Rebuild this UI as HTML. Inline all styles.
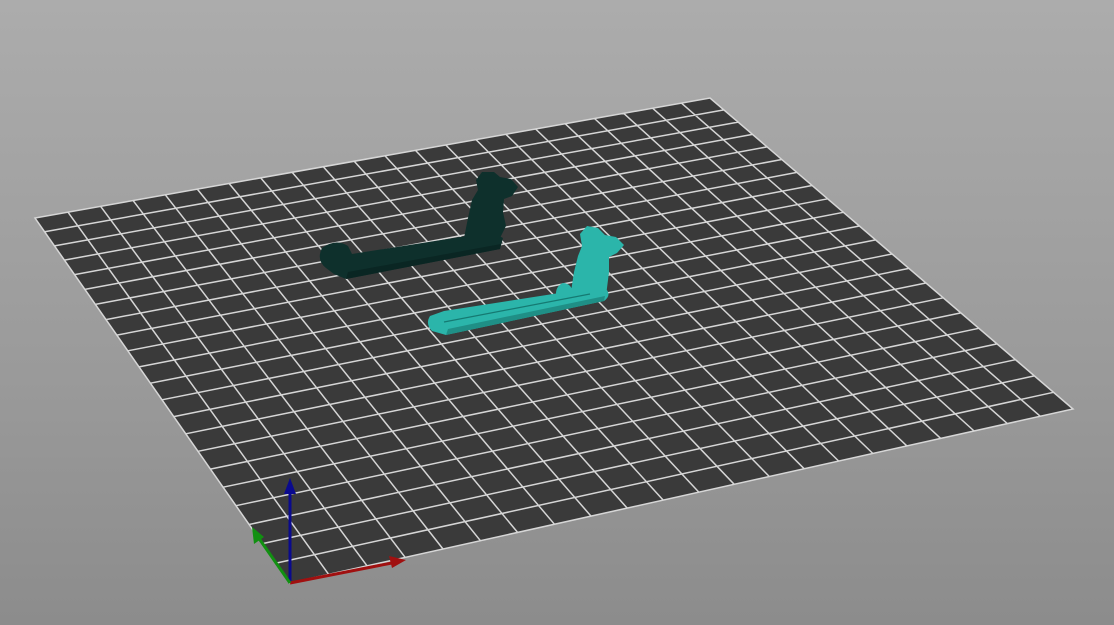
<!DOCTYPE html>
<html><head><meta charset="utf-8"><style>
html,body{margin:0;padding:0}
body{width:1114px;height:625px;overflow:hidden;background:linear-gradient(#acacac,#9a9a9a 60%,#8c8c8c)}
svg{position:absolute;left:0;top:0}
</style></head><body>
<svg id="s" width="1114" height="625" viewBox="0 0 1114 625">
<polygon points="290,583 1073,409 710,98 35,218" fill="#3a3a3a"/>
<g id="grid" stroke="#d6d6d6" stroke-width="1.5" fill="none"></g>
<!-- dark object -->
<g fill="#0e302c">
<path d="M322,248 Q316,260 326,268 L334,274 L346,279 L500,249 L503,238 L492,232 L352,254 L348,246 Q336,238 322,248 Z"/>
<path d="M464,238 L468,218 L472,200 L478,190 L476,180 L482,172 L494,172 L500,177 L511,179 L518,187 L512,196 L504,199 L503,212 L506,226 L500,238 Z"/>
</g>
<g fill="#0a2623"><path d="M346,279 L500,249 L501,244 L348,272 Z"/></g>
<!-- teal object -->
<g fill="#2bb5aa">
<path d="M430,316 Q425,324 432,331 L446,335 L604,301 Q611,296 607,290 L598,287 L444,311 Z"/>
<path d="M570,298 L574,272 L578,256 L582,246 L580,234 L587,226 L598,228 L605,235 L616,237 L624,245 L617,253 L609,257 L609,272 L606,296 Z"/>
<path d="M556,297 Q555,286 563,283 Q572,283 574,296 Z"/>
</g>
<g fill="#1f8f86"><path d="M446,335 L604,301 L605,296 L448,329 Z"/></g>
<path d="M444,322 L590,294" stroke="#157a72" stroke-width="1.2"/>
<!-- axes -->
<g stroke-width="3" fill="none">
<line x1="290" y1="583" x2="290" y2="492" stroke="#0a0a8e"/>
<line x1="290" y1="583" x2="392" y2="563" stroke="#a01010"/>
<line x1="290" y1="583" x2="258" y2="537" stroke="#119011"/>
</g>
<polygon points="290,478 284,494 296,494" fill="#0a0a8e"/>
<polygon points="406,560 389,556 392,568" fill="#a01010"/>
<polygon points="252,527 254,544 264,537" fill="#119011"/>
</svg>
<script>
(function(){
var P=[[290,583],[1073,409],[710,98],[35,218]];
var x0=P[0][0],y0=P[0][1],x1=P[1][0],y1=P[1][1],x2=P[2][0],y2=P[2][1],x3=P[3][0],y3=P[3][1];
var dx1=x1-x2,dx2=x3-x2,dx3=x0-x1+x2-x3,dy1=y1-y2,dy2=y3-y2,dy3=y0-y1+y2-y3;
var den=dx1*dy2-dx2*dy1;
var g=(dx3*dy2-dx2*dy3)/den,h=(dx1*dy3-dx3*dy1)/den;
var a=x1-x0+g*x1,b=x3-x0+h*x3,c=x0,d=y1-y0+g*y1,e=y3-y0+h*y3,f=y0;
function m(u,v){var w=g*u+h*v+1;return [(a*u+b*v+c)/w,(d*u+e*v+f)/w];}
var N=22,s="";
for(var i=1;i<N;i++){var t=i/N;
var p=m(t,0),q=m(t,1);s+="M"+p[0].toFixed(1)+","+p[1].toFixed(1)+"L"+q[0].toFixed(1)+","+q[1].toFixed(1);
p=m(0,t);q=m(1,t);s+="M"+p[0].toFixed(1)+","+p[1].toFixed(1)+"L"+q[0].toFixed(1)+","+q[1].toFixed(1);}
s+="M290,583L1073,409L710,98L35,218Z";
var el=document.createElementNS("http://www.w3.org/2000/svg","path");
el.setAttribute("d",s);document.getElementById("grid").appendChild(el);
})();
</script>
</body></html>
